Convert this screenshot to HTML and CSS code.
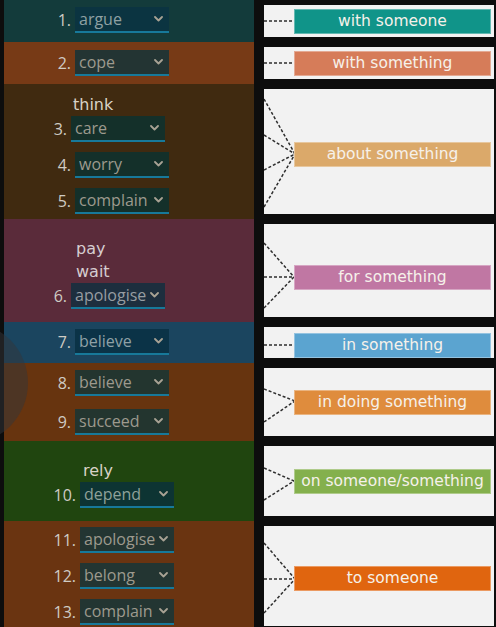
FILE: index.html
```html
<!DOCTYPE html>
<html lang="en">
<head>
<meta charset="utf-8">
<title>Dependent prepositions</title>
<link rel="stylesheet" href="styles.css">
</head>
<body>
<main class="sheet">

  <section class="row r1">
    <div class="left">
      <div class="item"><span class="num">1.</span><span class="sel"><select><option>argue</option></select><svg class="chev" width="9" height="6" viewBox="0 0 9 6"><path d="M1 1l3.5 3.5L8 1" /></svg></span></div>
    </div>
    <div class="right">
      <div class="box">
        <svg class="links" width="34" height="32"><line x1="0" y1="16" x2="30" y2="16"/></svg>
        <span class="tag c-teal">with someone</span>
      </div>
    </div>
  </section>

  <section class="row r2">
    <div class="left">
      <div class="item"><span class="num">2.</span><span class="sel"><select><option>cope</option></select><svg class="chev" width="9" height="6" viewBox="0 0 9 6"><path d="M1 1l3.5 3.5L8 1" /></svg></span></div>
    </div>
    <div class="right">
      <div class="box">
        <svg class="links" width="34" height="32"><line x1="0" y1="16" x2="30" y2="16"/></svg>
        <span class="tag c-salmon">with something</span>
      </div>
    </div>
  </section>

  <section class="row r3">
    <div class="left">
      <div class="word w-think">think</div>
      <div class="item shift"><span class="num">3.</span><span class="sel"><select><option>care</option></select><svg class="chev" width="9" height="6" viewBox="0 0 9 6"><path d="M1 1l3.5 3.5L8 1" /></svg></span></div>
      <div class="item"><span class="num">4.</span><span class="sel"><select><option>worry</option></select><svg class="chev" width="9" height="6" viewBox="0 0 9 6"><path d="M1 1l3.5 3.5L8 1" /></svg></span></div>
      <div class="item"><span class="num">5.</span><span class="sel"><select><option>complain</option></select><svg class="chev" width="9" height="6" viewBox="0 0 9 6"><path d="M1 1l3.5 3.5L8 1" /></svg></span></div>
    </div>
    <div class="right">
      <div class="box">
        <svg class="links" width="34" height="125">
          <line x1="0" y1="10" x2="31" y2="65"/>
          <line x1="0" y1="46" x2="31" y2="65"/>
          <line x1="0" y1="81" x2="31" y2="65"/>
          <line x1="0" y1="118" x2="31" y2="65"/>
        </svg>
        <span class="tag c-sand down6">about something</span>
      </div>
    </div>
  </section>

  <section class="row r4">
    <div class="left">
      <div class="word w-pay">pay</div>
      <div class="word w-pay">wait</div>
      <div class="item shift"><span class="num">6.</span><span class="sel"><select><option>apologise</option></select><svg class="chev" width="9" height="6" viewBox="0 0 9 6"><path d="M1 1l3.5 3.5L8 1" /></svg></span></div>
    </div>
    <div class="right">
      <div class="box">
        <svg class="links" width="34" height="93">
          <line x1="0" y1="19" x2="30" y2="53"/>
          <line x1="0" y1="53" x2="30" y2="53"/>
          <line x1="0" y1="84" x2="30" y2="53"/>
        </svg>
        <span class="tag c-pink down13">for something</span>
      </div>
    </div>
  </section>

  <section class="row r5">
    <div class="left">
      <div class="item"><span class="num">7.</span><span class="sel"><select><option>believe</option></select><svg class="chev" width="9" height="6" viewBox="0 0 9 6"><path d="M1 1l3.5 3.5L8 1" /></svg></span></div>
    </div>
    <div class="right">
      <div class="box">
        <svg class="links" width="34" height="31"><line x1="0" y1="18" x2="30" y2="18"/></svg>
        <span class="tag c-sky down6">in something</span>
      </div>
    </div>
  </section>

  <section class="row r6">
    <div class="left">
      <div class="item"><span class="num">8.</span><span class="sel"><select><option>believe</option></select><svg class="chev" width="9" height="6" viewBox="0 0 9 6"><path d="M1 1l3.5 3.5L8 1" /></svg></span></div>
      <div class="item"><span class="num">9.</span><span class="sel"><select><option>succeed</option></select><svg class="chev" width="9" height="6" viewBox="0 0 9 6"><path d="M1 1l3.5 3.5L8 1" /></svg></span></div>
    </div>
    <div class="right">
      <div class="box">
        <svg class="links" width="34" height="68">
          <line x1="0" y1="21" x2="31" y2="33"/>
          <line x1="0" y1="54" x2="31" y2="33"/>
        </svg>
        <span class="tag c-orange">in doing something</span>
      </div>
    </div>
  </section>

  <section class="row r7">
    <div class="left">
      <div class="word w-rely">rely</div>
      <div class="item two"><span class="num">10.</span><span class="sel"><select><option>depend</option></select><svg class="chev" width="9" height="6" viewBox="0 0 9 6"><path d="M1 1l3.5 3.5L8 1" /></svg></span></div>
    </div>
    <div class="right">
      <div class="box">
        <svg class="links" width="34" height="70">
          <line x1="0" y1="22" x2="30" y2="35"/>
          <line x1="0" y1="54" x2="30" y2="35"/>
        </svg>
        <span class="tag c-green">on someone/something</span>
      </div>
    </div>
  </section>

  <section class="row r8">
    <div class="left">
      <div class="item two"><span class="num">11.</span><span class="sel"><select><option>apologise</option></select><svg class="chev" width="9" height="6" viewBox="0 0 9 6"><path d="M1 1l3.5 3.5L8 1" /></svg></span></div>
      <div class="item two"><span class="num">12.</span><span class="sel"><select><option>belong</option></select><svg class="chev" width="9" height="6" viewBox="0 0 9 6"><path d="M1 1l3.5 3.5L8 1" /></svg></span></div>
      <div class="item two"><span class="num">13.</span><span class="sel"><select><option>complain</option></select><svg class="chev" width="9" height="6" viewBox="0 0 9 6"><path d="M1 1l3.5 3.5L8 1" /></svg></span></div>
    </div>
    <div class="right">
      <div class="box">
        <svg class="links" width="34" height="100">
          <line x1="0" y1="17" x2="31" y2="53"/>
          <line x1="0" y1="53" x2="31" y2="53"/>
          <line x1="0" y1="87" x2="31" y2="53"/>
        </svg>
        <span class="tag c-deep down5">to someone</span>
      </div>
    </div>
  </section>

</main>
<div class="fab" aria-hidden="true"></div>
</body>
</html>
```

FILE: styles.css
```css
html, body {
  margin: 0;
  padding: 0;
  background: #0d0d0d;
  overflow: hidden;
}

.sheet {
  margin-left: 4px;
  width: 490px;
  font-family: "Open Sans", "Noto Sans", sans-serif;
}

.row {
  display: grid;
  grid-template-columns: 250px 230px;
  column-gap: 10px;
}

.r1 { height: 42px; }
.r2 { height: 42px; }
.r3 { height: 135px; }
.r4 { height: 103px; }
.r5 { height: 41px; }
.r6 { height: 78px; }
.r7 { height: 80px; }
.r8 { height: 110px; }

.left {
  display: flex;
  flex-direction: column;
  align-items: flex-start;
  box-sizing: border-box;
}

.r1 .left { background: #133b3b; padding-top: 7px; }
.r2 .left { background: #773a16; padding-top: 8px; }
.r3 .left { background: #402a10; padding-top: 9px; }
.r4 .left { background: #5a2b3a; padding-top: 18px; }
.r5 .left { background: #1b455f; padding-top: 7px; }
.r6 .left { background: #67340f; padding-top: 7px; }
.r7 .left { background: #20450f; padding-top: 18px; }
.r8 .left { background: #6a3411; padding-top: 6px; }

.item + .item { margin-top: 10px; }
.r6 .item + .item { margin-top: 13px; }

.item {
  display: flex;
  align-items: center;
}

.num {
  box-sizing: border-box;
  width: 71px;
  padding-right: 4px;
  text-align: right;
  font-size: 16px;
  color: #cfcbc4;
}
.item.shift .num { width: 67px; }
.item.two .num { width: 76px; }

.word {
  font-family: "DejaVu Sans", sans-serif;
  font-size: 16px;
  line-height: 23px;
  height: 23px;
  color: #d8d2c6;
}
.w-think { padding-left: 69px; }
.w-pay { padding-left: 72px; color: #d6cdd0; }
.w-rely { padding-left: 79px; }

.sel {
  position: relative;
  display: block;
}

.sel select {
  display: block;
  appearance: none;
  -webkit-appearance: none;
  box-sizing: border-box;
  width: 94px;
  height: 26px;
  margin: 0;
  border: 0;
  border-bottom: 2px solid #17799a;
  border-radius: 0;
  padding: 0 14px 0 4px;
  font-family: "Open Sans", "Noto Sans", sans-serif;
  font-size: 16px;
  line-height: 24px;
  color: #9d9a8e;
  background: #233433;
}

.chev {
  position: absolute;
  right: 6px;
  top: 9px;
  fill: none;
  stroke: #a8a294;
  stroke-width: 1.8;
  stroke-linecap: round;
  stroke-linejoin: round;
  pointer-events: none;
}

.r1 .sel select { background: #0b3441; color: #8fa1a4; }
.r2 .sel select { background: #233433; }
.r3 .sel select { background: #14302a; }
.r4 .sel select { background: #1d2e3e; color: #979da2; }
.r5 .sel select { background: #0b3347; color: #8fa1a6; }
.r6 .sel select { background: #23352f; }
.r7 .sel select { background: #0d3433; color: #8fa19a; }
.r8 .sel select { background: #233532; }

.right {
  padding: 5px 0;
  display: flex;
}

.box {
  position: relative;
  flex: 1;
  display: flex;
  align-items: center;
  padding-left: 30px;
  background: #f2f2f2;
}

.links {
  position: absolute;
  left: 0;
  top: 0;
  stroke: #2e2e2e;
  stroke-width: 1.5;
  stroke-dasharray: 3 2;
}

.tag {
  position: relative;
  box-sizing: border-box;
  width: 197px;
  height: 25px;
  line-height: 23px;
  text-align: center;
  font-family: "DejaVu Sans", sans-serif;
  font-size: 15.5px;
  color: #f6f1ea;
  border: 1px solid rgba(255, 255, 255, 0.35);
}

.down13 { margin-top: 13px; }
.down6 { margin-top: 6px; }
.down5 { margin-top: 5px; }

.c-teal { background: #109489; }
.c-salmon { background: #d67c59; }
.c-sand { background: #dba96a; }
.c-pink { background: #c077a3; }
.c-sky { background: #5ba4d0; }
.c-orange { background: #df8c3d; }
.c-green { background: #84b04d; }
.c-deep { background: #e0650f; }

.fab {
  position: absolute;
  left: -94px;
  top: 322px;
  width: 122px;
  height: 122px;
  border-radius: 50%;
  background: rgba(52, 54, 57, 0.5);
  pointer-events: none;
}
```
